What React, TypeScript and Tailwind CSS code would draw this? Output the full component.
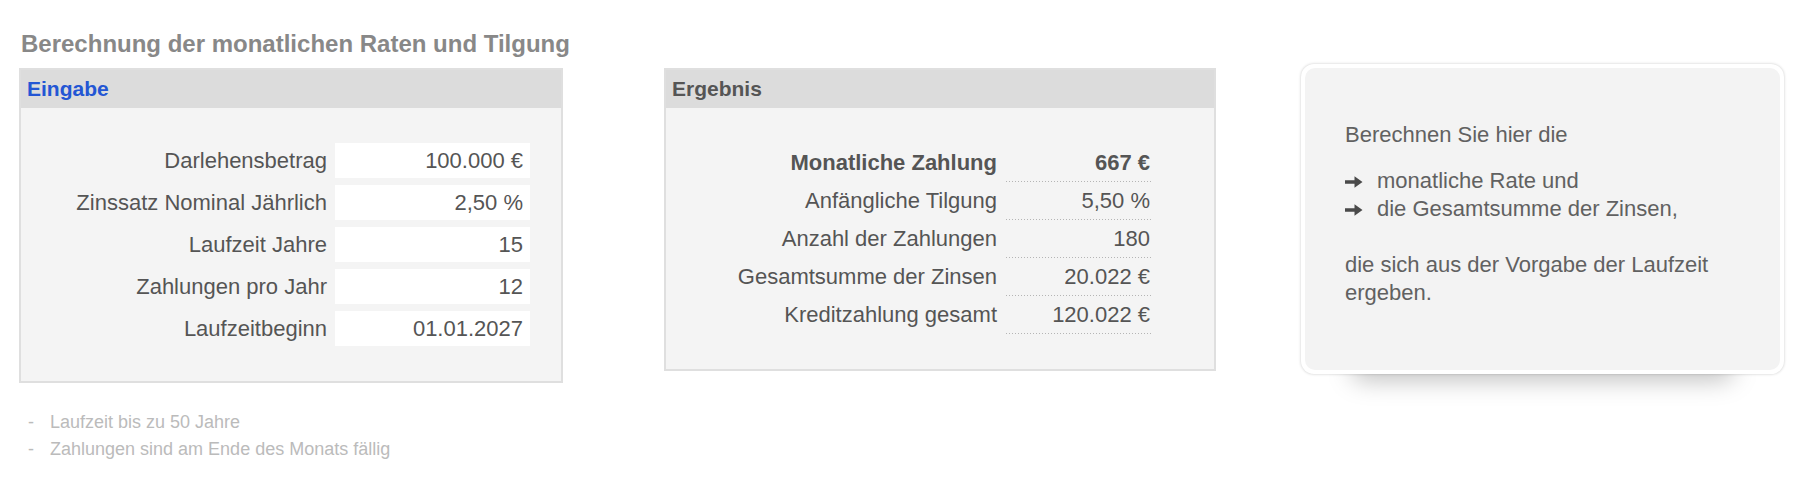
import React from "react";

const inputs = [
  ["Darlehensbetrag", "100.000 €"],
  ["Zinssatz Nominal Jährlich", "2,50 %"],
  ["Laufzeit Jahre", "15"],
  ["Zahlungen pro Jahr", "12"],
  ["Laufzeitbeginn", "01.01.2027"],
];

const results = [
  ["Monatliche Zahlung", "667 €"],
  ["Anfängliche Tilgung", "5,50 %"],
  ["Anzahl der Zahlungen", "180"],
  ["Gesamtsumme der Zinsen", "20.022 €"],
  ["Kreditzahlung gesamt", "120.022 €"],
];

const notes = ["Laufzeit bis zu 50 Jahre", "Zahlungen sind am Ende des Monats fällig"];

const Arrow = () => (
  <svg width="18" height="14" viewBox="0 0 18 14" className="mt-[8px] mr-[14px] shrink-0">
    <path d="M0 5.3 H9.5 V1.2 L17.5 7 L9.5 12.8 V8.7 H0 Z" fill="#4a4a4a" />
  </svg>
);

const App = () => {
  return (
    <div className="min-h-[501px] font-['Liberation_Sans',Arial,sans-serif] text-[#555]">
      <div className="flex items-start pl-[19px] pt-[30px]">
        {/* Eingabe */}
        <div className="w-[544px] shrink-0">
          <h1 className="mb-[10px] ml-[2px] whitespace-nowrap text-[24px] font-bold leading-[28px] text-[#888]">
            Berechnung der monatlichen Raten und Tilgung
          </h1>
          <div className="border-2 border-[#dfdfdf] bg-[#f4f4f4]">
            <div className="flex h-[38px] items-center bg-[#dcdcdc] px-[6px] text-[21px] font-bold text-[#2356d4]">
              Eingabe
            </div>
            <div className="flex flex-col gap-[7px] py-[35px]">
              {inputs.map(([label, value]) => (
                <div key={label} className="flex h-[35px] items-center text-[22px] leading-[35px]">
                  <div className="w-[306px] text-right">{label}</div>
                  <div className="ml-[8px] h-[35px] w-[195px] bg-white pr-[7px] text-right">{value}</div>
                </div>
              ))}
            </div>
          </div>
          <ul className="mt-[26px] text-[18px] leading-[27px] text-[#bbb]">
            {notes.map((n) => (
              <li key={n} className="flex">
                <span className="ml-[9px] w-[22px]">-</span>
                <span>{n}</span>
              </li>
            ))}
          </ul>
        </div>

        {/* Ergebnis */}
        <div className="ml-[101px] mt-[38px] w-[552px] shrink-0 border-2 border-[#dfdfdf] bg-[#f4f4f4]">
          <div className="flex h-[38px] items-center bg-[#dcdcdc] px-[6px] text-[21px] font-bold text-[#555]">
            Ergebnis
          </div>
          <div className="pb-[35px] pt-[36px]">
            {results.map(([label, value], i) => (
              <div
                key={label}
                className={`flex h-[38px] items-end text-[22px] leading-[26px] ${i === 0 ? "font-bold" : ""}`}
              >
                <div className="w-[331px] pb-[6px] text-right">{label}</div>
                <div className="ml-[9px] flex w-[146px] flex-col">
                  <div className="pb-[5px] pr-[2px] text-right">{value}</div>
                  <div className="h-px w-full bg-[linear-gradient(to_right,#b5b5b5_1px,transparent_1px)] bg-[length:3px_1px] bg-repeat-x" />
                </div>
              </div>
            ))}
          </div>
        </div>

        {/* Info card */}
        <div className="relative ml-[85px] mt-[34px] h-[310px] w-[483px] shrink-0">
          <div className="absolute bottom-[-6px] left-[50px] right-[50px] -z-10 h-[26px] rounded-full bg-black/25 blur-[12px]" />
          <div className="h-full rounded-[13px] bg-white p-[4px] shadow-[0_0_3px_rgba(0,0,0,0.22)]">
            <div className="h-full rounded-[10px] bg-[#f3f3f3] pl-[40px] pt-[53px] text-[22px] leading-[28px] text-[#616161]">
              <p>Berechnen Sie hier die</p>
              <ul className="mt-[18px]">
                <li className="flex">
                  <Arrow />
                  <span>monatliche Rate und</span>
                </li>
                <li className="flex">
                  <Arrow />
                  <span>die Gesamtsumme der Zinsen,</span>
                </li>
              </ul>
              <p className="mt-[28px]">
                die sich aus der Vorgabe der Laufzeit
                <br />
                ergeben.
              </p>
            </div>
          </div>
        </div>
      </div>
    </div>
  );
};

export default App;
